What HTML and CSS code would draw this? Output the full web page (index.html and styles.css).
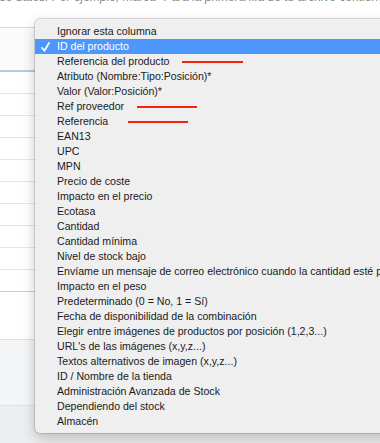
FILE: index.html
```html
<!DOCTYPE html>
<html lang="es">
<head>
<meta charset="UTF-8">
<title>Importar – columnas</title>
<meta name="viewport" content="width=device-width, initial-scale=1">
<link rel="stylesheet" href="styles.css">
</head>
<body>
  <div class="page">
    <p class="hint">se datos. Por ejemplo, marca "Para la primera fila de tu archivo contiene cabeceras" si tu archivo</p>

    <div class="panel">
      <div class="grid-head"></div>
      <div class="grid-row"></div>
      <div class="grid-row"></div>
      <div class="grid-row"></div>
      <div class="grid-row"></div>
      <div class="grid-row"></div>
      <div class="grid-row"></div>
      <div class="grid-row"></div>
      <div class="grid-row"></div>
      <div class="grid-row"></div>
      <div class="grid-row last"></div>
      <div class="grid-pad"></div>
    </div>
    <div class="panel-foot"></div>
  </div>

  <ul class="menu">
    <li>Ignorar esta columna</li>
    <li class="selected">
      <svg class="check" width="9" height="10" viewBox="0 0 9 10"><path d="M1 5.8 L3.4 8.8 L8 1" fill="none" stroke="#fff" stroke-width="1.7" stroke-linecap="round" stroke-linejoin="round"/></svg>
      ID del producto
    </li>
    <li>Referencia del producto<span class="mark mark-1"></span></li>
    <li>Atributo (Nombre:Tipo:Posición)*</li>
    <li>Valor (Valor:Posición)*</li>
    <li>Ref proveedor<span class="mark mark-2"></span></li>
    <li>Referencia<span class="mark mark-3"></span></li>
    <li>EAN13</li>
    <li>UPC</li>
    <li>MPN</li>
    <li>Precio de coste</li>
    <li>Impacto en el precio</li>
    <li>Ecotasa</li>
    <li>Cantidad</li>
    <li>Cantidad mínima</li>
    <li>Nivel de stock bajo</li>
    <li>Envíame un mensaje de correo electrónico cuando la cantidad esté por debajo de este nivel</li>
    <li>Impacto en el peso</li>
    <li>Predeterminado (0 = No, 1 = Sí)</li>
    <li>Fecha de disponibilidad de la combinación</li>
    <li>Elegir entre imágenes de productos por posición (1,2,3...)</li>
    <li>URL's de las imágenes (x,y,z...)</li>
    <li>Textos alternativos de imagen (x,y,z...)</li>
    <li>ID / Nombre de la tienda</li>
    <li>Administración Avanzada de Stock</li>
    <li>Dependiendo del stock</li>
    <li>Almacén</li>
  </ul>
</body>
</html>
```

FILE: styles.css
```css
:root{
  --ink:#1a1a1a;
  --menu-bg:#efefef;
  --select:#4d97fa;
  --mark:#f3230c;
}
html, body{ margin:0; padding:0; }
body{
  font-family:"Liberation Sans", Arial, sans-serif;
  background:#eceeef;
  width:380px; height:443px; overflow:hidden;
  position:relative;
}
.page{ display:flex; flex-direction:column; }
.hint{
  margin:-10px 0 0; height:37px; padding:0;
  font-size:12px; line-height:14px; font-style:italic; color:#8a8a8a;
  white-space:nowrap; overflow:hidden; background:#fff;
}
.panel{ background:#fff; display:flex; flex-direction:column; }
.grid-head{
  height:42px; background:#fbfbfb;
  border-top:1px solid #dcdcdc; border-bottom:2px solid #a9cfe6;
}
.grid-row{ height:21px; border-bottom:1px solid #e6e6e6; }
.grid-row.last{ border-bottom-color:#cfcfcf; }
.grid-pad{ height:47px; border-bottom:1px solid #dedede; }
.panel-foot{ height:65px; background:#f4f5f6; border-bottom:1px solid #e2e2e2; }

/* dropdown sobre la tabla */
.menu{
  position:absolute; left:35px; top:19px; width:380px;
  margin:0; padding:5px 0 4px; list-style:none;
  background:var(--menu-bg); border-radius:5px;
  box-shadow:0 0 0 1px rgba(0,0,0,.13), 0 5px 14px rgba(0,0,0,.22);
  font-size:10.6px; color:var(--ink);
}
.menu li{
  position:relative; height:15px; line-height:15px;
  padding-left:22px; white-space:nowrap;
}
.menu li.selected{ background:var(--select); color:#fff; }
.check{ position:absolute; left:6px; top:3px; }
.mark{ position:absolute; top:7px; height:2px; background:var(--mark); }
.mark-1{ left:147px; width:61px; }
.mark-2{ left:102px; width:60px; }
.mark-3{ left:93px; width:60px; }
```
